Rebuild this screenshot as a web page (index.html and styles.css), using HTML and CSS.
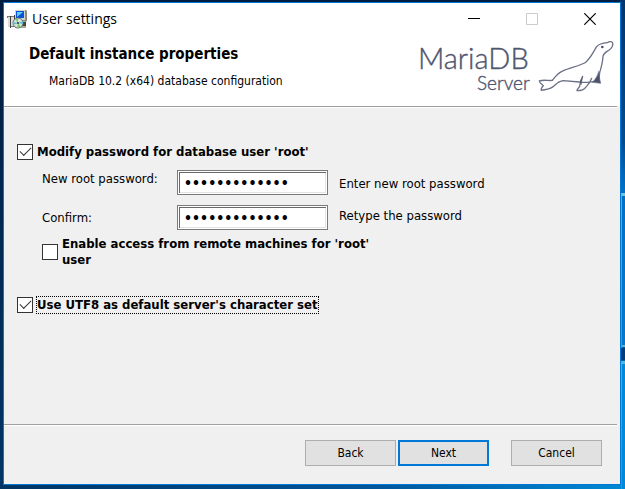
FILE: index.html
```html
<!DOCTYPE html>
<html lang="en">
<head>
<meta charset="utf-8">
<title>User settings</title>
<link rel="stylesheet" href="styles.css">
</head>
<body>
<main class="window">
  <header class="titlebar">
    <svg class="app-icon" width="20" height="20" viewBox="0 0 20 20" aria-hidden="true">
      <path d="M8 1h11l1 1v10l-3 2H8z" fill="#8b8b80"/>
      <path d="M8 1h10v10H8z" fill="#d6d3c4"/>
      <path d="M9 2h8v7H9z" fill="#0b50d8"/>
      <path d="M10 3h6l-6 5z" fill="#58d5f8"/>
      <path d="M8 12h10l1 2v5H8z" fill="#a9a798"/>
      <path d="M15 13h4v4h-4z" fill="#45453f"/>
      <path d="M0 7h8v11H3V9H0z" fill="#77776f"/>
      <path d="M1 8h2v10H1zM4 8h3v9H4z" fill="#dedede"/>
      <path d="M3 7h1v12H3zM7 6h1v5H7z" fill="#40403c"/>
      <circle cx="11" cy="14" r="5" fill="#d8e4dd" stroke="#62716c"/>
      <path d="M11 14L8 10l3-1zM11 14l3 4-4 1z" fill="#72cc68"/>
      <path d="M11 14l5-2v3zM11 14l-5-1v3z" fill="#58bed1"/>
      <circle cx="11" cy="14" r="1" fill="#333"/>
    </svg>
    <h1 class="title">User settings</h1>
    <div class="window-controls">
      <button type="button" aria-label="Minimize"><svg width="12" height="12" viewBox="0 0 12 12"><path d="M0 5.500h12" stroke="#000"/></svg></button>
      <button type="button" aria-label="Maximize" disabled><svg width="12" height="12" viewBox="0 0 12 12"><path d="M.5.5h11v11H.5z" fill="none" stroke="#ccc"/></svg></button>
      <button type="button" aria-label="Close"><svg width="12" height="12" viewBox="0 0 12 12"><path d="M.3.3l11.400 11.400M11.700.3L.3 11.700" stroke="#000" stroke-width="1.200"/></svg></button>
    </div>
  </header>
  <section class="banner">
    <div class="heading">
      <h2>Default instance properties</h2>
      <p>MariaDB 10.2 (x64) database configuration</p>
    </div>
    <svg class="logo" width="200" height="66" viewBox="0 0 200 66" role="img" aria-label="MariaDB Server">
      <text class="logo-name" x="3" y="35">MariaDB</text>
      <text class="logo-sub" x="62" y="56">Server</text>
      <g transform="translate(115 -4) scale(.3333)" fill="none" stroke="#6b7186" stroke-width="4" stroke-linejoin="round" stroke-linecap="round">
        <path d="M67 151C75 142 82 130 96 124C115 115 145 108 164 99C181 87 190 65 200 50C208 40 220 39 232 38C237 34 247 34 248 39C250 46 245 54 238 60C230 65 221 68 219 79C218 97 214 112 209 128L207 147"/>
        <path d="M67 151C55 153 42 148 28 153C29 160 36 163 40 167C35 171 33 176 34 181C49 178 60 179 71 169C79 162 87 153 99 152L148 156"/>
        <path d="M158 139C152 150 151 160 149 169C147 175 141 176 141 182C153 182 162 180 167 172C174 164 180 159 185 145M154 157C169 158 180 156 190 155"/>
        <path d="M206 125C202 139 197 147 187 157L212 160L209 146Z" fill="#4b526e" stroke-width="2"/>
        <path d="M149 156L158 140L154 164Z" fill="#4b526e" stroke-width="1"/>
        <circle cx="217" cy="51" r="4" fill="#4b526e" stroke="none"/>
      </g>
    </svg>
  </section>
  <hr class="rule">
  <form class="settings">
    <label class="check"><input type="checkbox" checked><span>Modify password for database user 'root'</span></label>
    <div class="fields">
      <label for="password">New root password:</label>
      <input id="password" type="password" value="mariadbserver" aria-describedby="password-hint">
      <span class="hint" id="password-hint">Enter new root password</span>
      <label for="confirm">Confirm:</label>
      <input id="confirm" type="password" value="mariadbserver" aria-describedby="confirm-hint">
      <span class="hint" id="confirm-hint">Retype the password</span>
    </div>
    <label class="check remote"><input type="checkbox"><span>Enable access from remote machines for 'root' user</span></label>
    <label class="check utf"><input type="checkbox" checked><span class="focused">Use UTF8 as default server's character set</span></label>
  </form>
  <hr class="rule">
  <footer class="actions">
    <button type="button">Back</button>
    <button type="button" class="primary">Next</button>
    <button type="button" class="cancel">Cancel</button>
  </footer>
</main>
</body>
</html>
```
FILE: styles.css
```css
* {
  box-sizing: border-box;
}

html {
  height: 100%;
}

body {
  display: flex;
  min-height: 100%;
  margin: 0;
  padding: 2px 4px 4px 3px;
  background:
    linear-gradient(#55b6d8, #2e9fd0) right 3px top 194px / 1px 154px no-repeat,
    linear-gradient(#4eb5d2, #1f9ad8) right 3px top 362px / 1px 127px no-repeat,
    linear-gradient(#72c4de, #72c4de) right 0 top 193px / 4px 3px no-repeat,
    linear-gradient(#55b6d8, #55b6d8) right 0 top 345px / 4px 2px no-repeat,
    linear-gradient(#55b6d8, #55b6d8) right 0 top 361px / 4px 3px no-repeat,
    linear-gradient(#02366e 0, #004d91 140px, #0070c4 190px, #0877c9 347px, #003d7d 348px, #003d7d 360px, #0089d8 361px) right top / 5px 100% no-repeat,
    linear-gradient(90deg, #003464, #00569b 60%, #0088d4) bottom / 100% 5px no-repeat,
    linear-gradient(#001c40, #003668);
  color: #000;
  font-family: "DejaVu Sans Condensed", "DejaVu Sans", sans-serif;
  font-stretch: condensed;
  font-size: 13px;
  line-height: 16px;
}

h1, h2, p {
  margin: 0;
}

.window {
  display: flex;
  flex: 1;
  flex-direction: column;
  border: 1px solid #0078d7;
  background: #f0f0f0;
}

.titlebar {
  display: flex;
  align-items: center;
  height: 31px;
  padding-left: 3px;
  background: #fff;
}

.title {
  flex: 1;
  padding-left: 5px;
  font: 14px/20px "Open Sans", sans-serif;
}

.window-controls {
  display: flex;
  padding-right: 1px;
}

.window-controls button {
  display: grid;
  place-items: center;
  width: 58px;
  height: 30px;
  padding: 0;
  border: 0;
  background: none;
}

.banner {
  display: flex;
  justify-content: space-between;
  height: 72px;
  padding: 0 5px 0 25px;
  background: #fff;
}

.heading {
  padding-top: 12px;
}

.heading h2 {
  font-size: 15px;
  line-height: 16px;
}

.heading p {
  padding: 11px 0 0 20px;
  font-size: 12px;
}

.logo {
  flex: none;
}

.logo text {
  fill: #4f566f;
  stroke: #4f566f;
  stroke-width: .4px;
  font-family: Lato, sans-serif;
  font-weight: 300;
}

.logo-name {
  font-size: 29px;
}

.logo-sub {
  font-size: 19px;
}

.rule {
  width: calc(100% - 3px);
  height: 2px;
  margin: 0;
  border: 0;
  border-top: 1px solid #a0a0a0;
  background: #fff;
}

.settings {
  flex: 1;
  padding: 36px 13px 0;
}

.check {
  display: flex;
  align-items: center;
  gap: 4px;
  width: max-content;
  font-weight: bold;
}

.check input {
  display: grid;
  flex: none;
  width: 16px;
  height: 16px;
  margin: 0;
  border: 1px solid #333;
  background: #fff;
  appearance: none;
}

.check input:checked::before {
  width: 10px;
  height: 5px;
  margin: 2px;
  border: solid #333;
  border-width: 0 0 1px 1px;
  content: "";
  transform: rotate(-45deg);
}

.fields {
  display: grid;
  grid-template-columns: 135px 151px 1fr;
  row-gap: 10px;
  padding: 10px 0 0 25px;
}

.fields label {
  padding-top: 1px;
}

.fields label:nth-of-type(2) {
  padding-top: 5px;
}

.fields input {
  width: 100%;
  height: 25px;
  padding: 0 6px;
  border: 1px solid #7a7a7a;
  background: #fff;
  box-shadow: inset 0 0 0 1px #fff, inset 2px 2px #696969, inset -2px -2px #e3e3e3;
  color: #000;
  font: inherit;
  font-size: 14px;
  font-weight: bold;
}

.hint {
  padding: 6px 0 0 11px;
}

.hint:last-child {
  padding-top: 3px;
}

.remote {
  width: 360px;
  padding: 6px 0 0 25px;
}

.utf {
  margin-top: 29px;
}

.focused {
  outline: 1px dotted #000;
}

.actions {
  display: flex;
  justify-content: flex-end;
  gap: 2px;
  padding: 14px 18px 18px;
}

.actions button {
  width: 91px;
  height: 26px;
  padding: 0;
  border: 1px solid #adadad;
  background: #e1e1e1;
  color: #000;
  font: inherit;
  font-size: 12px;
}

.actions .primary {
  border: 2px solid #0078d7;
}

.actions .cancel {
  margin-left: 20px;
}
```
